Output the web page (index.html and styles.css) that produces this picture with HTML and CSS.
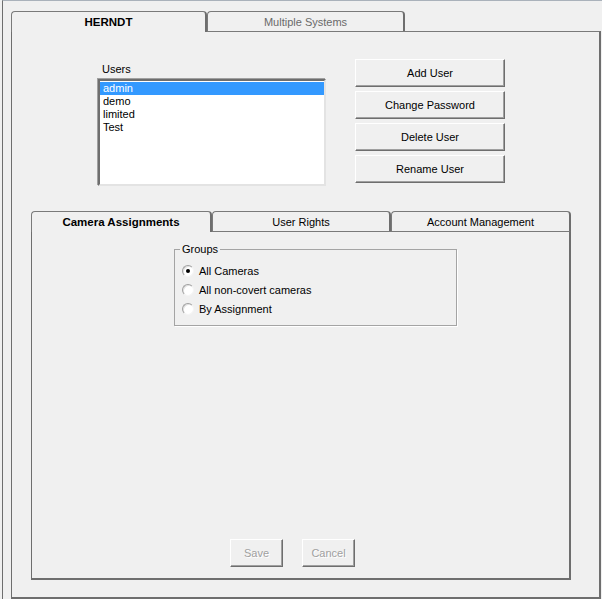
FILE: index.html
```html
<!DOCTYPE html>
<html>
<head>
  <meta charset="UTF-8">
  <title>Users</title>
  <link rel="stylesheet" href="styles.css">
</head>
<body>
  <div class="window">
    <div class="tabs">
      <div class="tab tab-system active">HERNDT</div>
      <div class="tab tab-multi muted">Multiple Systems</div>
    </div>
    <div class="panel">
      <div class="users-row">
        <div class="users">
          <div class="label">Users</div>
          <ul class="listbox">
            <li class="selected">admin</li>
            <li>demo</li>
            <li>limited</li>
            <li>Test</li>
          </ul>
        </div>
        <div class="user-actions">
          <button class="btn btn-wide">Add User</button>
          <button class="btn btn-wide">Change Password</button>
          <button class="btn btn-wide">Delete User</button>
          <button class="btn btn-wide">Rename User</button>
        </div>
      </div>

      <div class="sub">
        <div class="tabs sub-tabs">
          <div class="tab tab-camera active">Camera Assignments</div>
          <div class="tab tab-rights">User Rights</div>
          <div class="tab tab-account">Account Management</div>
        </div>
        <div class="panel sub-panel">
          <fieldset class="groups">
            <legend>Groups</legend>
            <label class="radio"><span class="dot checked"></span>All Cameras</label>
            <label class="radio"><span class="dot"></span>All non-covert cameras</label>
            <label class="radio"><span class="dot"></span>By Assignment</label>
          </fieldset>
          <div class="form-actions">
            <button class="btn btn-small" disabled>Save</button>
            <button class="btn btn-small" disabled>Cancel</button>
          </div>
        </div>
      </div>
    </div>
  </div>
</body>
</html>
```

FILE: styles.css
```css
body {
  margin: 0;
  background: #f0f0f0;
  font: 11px "Liberation Sans", Arial, sans-serif;
  color: #000;
}
.window {
  height: 599px;
  box-sizing: border-box;
  margin-left: 2px;
  border-top: 1px solid #aab2bb;
  border-left: 1px solid #6e6e6e;
  padding: 10px 0 0 8px;
}

/* tab strips */
.tabs {
  display: flex;
  height: 20px;
}
.tab {
  box-sizing: border-box;
  height: 20px;
  padding-top: 2px;
  border: 1px solid #7a7a7a;
  border-right: 2px solid #6e6e6e;
  border-bottom: none;
  border-radius: 4px 4px 0 0;
  line-height: 17px;
  text-align: center;
  background: #f0f0f0;
}
.tab.active {
  height: 21px;
  position: relative;
  z-index: 1;
  font-weight: bold;
  font-size: 11.5px;
}
.tab.muted {
  color: #6a6a6a;
}
.tab-system { width: 196px; }
.tab-multi { width: 198px; }
.tab-camera { width: 181px; }
.tab-rights { width: 179px; }
.tab-account { width: 180px; }

.panel {
  box-sizing: border-box;
  height: 568px;
  margin-right: 1px;
  border-top: 1px solid #7a7a7a;
  border-left: 1px solid #6e6e6e;
  border-right: 2px solid #6e6e6e;
  border-bottom: 2px solid #6e6e6e;
  display: flex;
  flex-direction: column;
}

/* users */
.users-row {
  box-sizing: border-box;
  height: 179px;
  display: flex;
  gap: 29px;
  padding: 27px 0 0 86px;
}
.users {
  margin-top: 4px;
}
.label {
  line-height: 13px;
  padding-left: 4px;
  margin-bottom: 3px;
}
.listbox {
  box-sizing: border-box;
  width: 228px;
  height: 107px;
  margin: 0;
  padding: 1px 0 0;
  list-style: none;
  background: #fff;
  border: 2px solid;
  border-color: #6e6e6e #e3e3e3 #e3e3e3 #6e6e6e;
  box-shadow: -1px -1px 0 #a0a0a0;
}
.listbox li {
  line-height: 13px;
  padding-left: 3px;
}
.listbox .selected {
  background: #3399ff;
  color: #fff;
}

.user-actions {
  display: flex;
  flex-direction: column;
  gap: 4px;
}
.btn {
  box-sizing: border-box;
  font: inherit;
  color: #000;
  background: #f0f0f0;
  border: 1px solid;
  border-color: #fff #6e6e6e #6e6e6e #fff;
  box-shadow: inset -1px -1px 0 #a0a0a0;
  padding: 0;
  height: 28px;
}
.btn-wide {
  width: 150px;
}
.btn-small {
  width: 53px;
}
.btn:disabled {
  color: #a0a0a0;
  text-shadow: 1px 1px 0 #fff;
}

/* camera assignments */
.sub {
  margin-left: 19px;
  width: 540px;
}
.sub-panel {
  height: 349px;
  margin-right: 0;
}
.groups {
  box-sizing: border-box;
  width: 283px;
  margin: 11px 0 0 142px;
  padding: 5px 5px 7px;
  border: 1px solid #a4a4a4;
  box-shadow: 1px 1px 0 #fff;
}
.groups legend {
  padding: 0 2px;
  line-height: 13px;
}
.radio {
  display: flex;
  align-items: center;
  height: 19px;
  gap: 5px;
}
.dot {
  box-sizing: border-box;
  width: 12px;
  height: 12px;
  margin-left: 2px;
  border-radius: 50%;
  border: 1px solid;
  border-color: #a0a0a0 #f4f4f4 #f4f4f4 #a0a0a0;
  background: #fff;
  box-shadow: inset 1px 1px 0 #e2e2e2;
  display: flex;
  align-items: center;
  justify-content: center;
}
.dot.checked::after {
  content: "";
  width: 4px;
  height: 4px;
  border-radius: 50%;
  background: #000;
}
.form-actions {
  margin-top: auto;
  display: flex;
  gap: 19px;
  padding: 0 0 11px 198px;
}
```
